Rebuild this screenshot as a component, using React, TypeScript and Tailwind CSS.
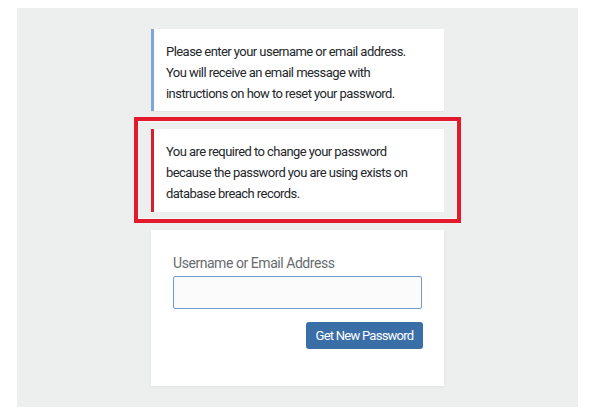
const font = { fontFamily: "Roboto, 'Liberation Sans', sans-serif" };

const App = () => {
  return (
    <div className="w-[600px] h-[418px] bg-white pt-[8px] pl-[17px]" style={font}>
      <div className="w-[561px] h-[399px] bg-[#edefef] flex flex-col items-center pt-[21px]">
        <div className="w-[293px] flex flex-col">
          <div className="bg-white border-l-[3px] border-[#7fa6d9] pl-[12px] pr-[8px] pt-[12px] pb-[7px] text-[13px] leading-[21px] tracking-[-0.55px] text-[#23272b] shadow-[0_1px_1px_rgba(0,0,0,0.04)]">
            Please enter your username or email address.
            <br />
            You will receive an email message with
            <br />
            instructions on how to reset your password.
          </div>

          <div className="-mx-[17px] mt-[6px] border-[4px] border-[#e3192c]">
            <div className="border border-[#f6f7f7] pt-[7px] pb-[6px] pl-[12px] pr-[12px]">
              <div className="bg-white border-l-[3px] border-[#d4202f] pl-[12px] pr-[8px] pt-[12px] pb-[8px] text-[13px] leading-[21px] tracking-[-0.55px] text-[#23272b]">
                You are required to change your password
                <br />
                because the password you are using exists on
                <br />
                database breach records.
              </div>
            </div>
          </div>

          <div className="mt-[7px] bg-white pt-[23px] px-[22px] pb-[37px] shadow-[0_1px_3px_rgba(0,0,0,0.06)]">
            <label htmlFor="user_login" className="block text-[14px] leading-[20px] tracking-[-0.45px] text-[#676b70]">
              Username or Email Address
            </label>
            <input
              id="user_login"
              type="text"
              className="mt-[3px] block w-full h-[33px] border border-[#6e9bd2] bg-[#fbfbfb] rounded-[2px] outline-none"
            />
            <div className="flex justify-end mt-[13px] -mr-[1px]">
              <button
                type="button"
                className="h-[27px] w-[117px] rounded-[3px] bg-[#3a6ea6] text-white text-[13px] leading-[27px] tracking-[-0.75px] text-center"
              >
                Get New Password
              </button>
            </div>
          </div>
        </div>
      </div>
    </div>
  );
};

export default App;
